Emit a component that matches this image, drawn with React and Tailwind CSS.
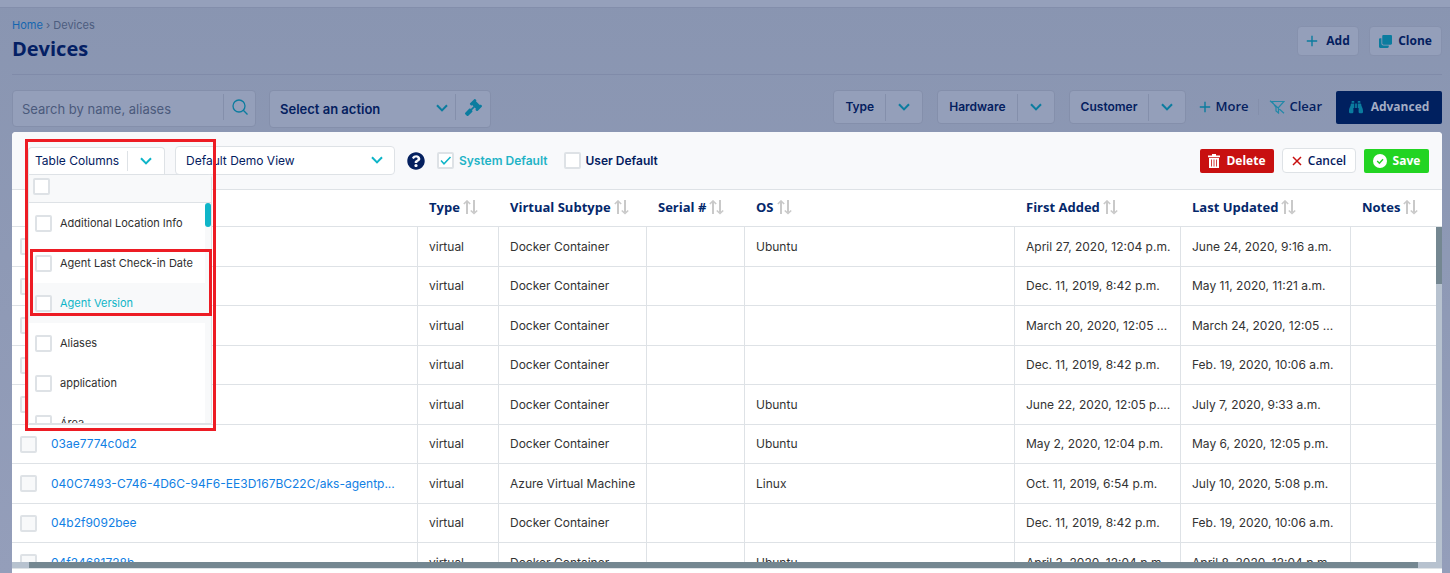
import React from "react";
import { FaGavel, FaClone, FaBinoculars, FaQuestionCircle } from "react-icons/fa";

const OPTIONS = [
  "Additional Location Info",
  "Agent Last Check-in Date",
  "Agent Version",
  "Aliases",
  "application",
  "Área",
];

const COLUMNS = ["Type", "Virtual Subtype", "Serial #", "OS", "First Added", "Last Updated", "Notes"];

const ROWS = [
  ["", "Docker Container", "Ubuntu", "April 27, 2020, 12:04 p.m.", "June 24, 2020, 9:16 a.m."],
  ["", "Docker Container", "", "Dec. 11, 2019, 8:42 p.m.", "May 11, 2020, 11:21 a.m."],
  ["", "Docker Container", "", "March 20, 2020, 12:05 ...", "March 24, 2020, 12:05 ..."],
  ["", "Docker Container", "", "Dec. 11, 2019, 8:42 p.m.", "Feb. 19, 2020, 10:06 a.m."],
  ["", "Docker Container", "Ubuntu", "June 22, 2020, 12:05 p....", "July 7, 2020, 9:33 a.m."],
  ["03ae7774c0d2", "Docker Container", "Ubuntu", "May 2, 2020, 12:04 p.m.", "May 6, 2020, 12:05 p.m."],
  ["040C7493-C746-4D6C-94F6-EE3D167BC22C/aks-agentp...", "Azure Virtual Machine", "Linux", "Oct. 11, 2019, 6:54 p.m.", "July 10, 2020, 5:08 p.m."],
  ["04b2f9092bee", "Docker Container", "", "Dec. 11, 2019, 8:42 p.m.", "Feb. 19, 2020, 10:06 a.m."],
  ["04f24681728b", "Docker Container", "Ubuntu", "April 3, 2020, 12:04 p.m.", "April 8, 2020, 12:04 p.m."],
];

function Chevron({ className = "text-[#0fb5c8]" }) {
  return (
    <svg viewBox="0 0 12 8" className={`h-2 w-3 shrink-0 ${className}`} fill="none" stroke="currentColor" strokeWidth="2" aria-hidden="true">
      <path d="M1 1.2 6 6.4 11 1.2" />
    </svg>
  );
}

function Plus() {
  return (
    <svg viewBox="0 0 12 12" className="size-3 text-[#0b7c9f]" fill="none" stroke="currentColor" strokeWidth="1.4" aria-hidden="true">
      <path d="M6 .8v10.4M.8 6h10.4" />
    </svg>
  );
}

function SortIcon() {
  return (
    <svg viewBox="0 0 15 15" className="size-[15px] text-[#c9c9c9]" fill="none" stroke="currentColor" aria-hidden="true">
      <path d="M4 1.5V14M11 0v12.5" strokeWidth="2" />
      <path d="M.8 4 4 1l3.2 3M7.8 10.5l3.2 3 3.2-3" strokeWidth="1.6" />
    </svg>
  );
}

function CheckBox({ label, checked = false, className = "bg-white" }) {
  return (
    <span className="relative inline-flex size-[17px] shrink-0">
      <input
        type="checkbox"
        aria-label={label}
        defaultChecked={checked}
        className={`peer size-[17px] appearance-none rounded-xs border-2 border-[#dee2e6] ${className}`}
      />
      <svg viewBox="0 0 17 17" className="pointer-events-none absolute inset-0 hidden text-[#0fb5c8] peer-checked:block" fill="none" stroke="currentColor" strokeWidth="1.5" aria-hidden="true">
        <path d="M4 8.5 7 11.8 13.5 5" />
      </svg>
    </span>
  );
}

function FilterButton({ children }) {
  return (
    <button type="button" className="flex h-[34px] items-center rounded-sm border border-[#848fab] bg-[#949fba] text-[12px] font-semibold text-[#04205f]">
      <span className="px-[11px]">{children}</span>
      <span className="flex h-[27px] items-center border-l border-[#848fab] px-3">
        <Chevron className="text-[#0b7c9f]" />
      </span>
    </button>
  );
}

function ColumnMenu() {
  return (
    <div className="absolute left-0 top-full z-10 w-[184px] rounded-tr border border-[#dee2e6] bg-white">
      <div className="flex h-[27px] items-start bg-[#f8f9fa] px-1 pt-[3px]">
        <CheckBox label="Select all columns" />
      </div>
      <div className="relative h-[221px] overflow-hidden border-t border-[#dee2e6]">
        <ul>
          {OPTIONS.map((name) => (
            <li key={name} className={name === "Agent Version" ? "bg-[#f8f9fa] text-[#0fb5c8]" : "text-[#2f2f2f]"}>
              <label className="flex h-10 items-center gap-2 pl-[6px] text-[11px] font-normal">
                <CheckBox label={name} />
                {name}
              </label>
            </li>
          ))}
        </ul>
        <div className="absolute inset-y-0 right-0 w-[6px] bg-[#f8f9fa]">
          <div className="h-6 rounded-full bg-[#0fb5c8]" />
        </div>
      </div>
      <div className="pointer-events-none absolute left-px top-[74px] h-[67px] w-[182px] border-[3px] border-[#ed1c24]" />
    </div>
  );
}

function ViewBar() {
  return (
    <div className="flex h-[58px] items-center justify-between border-b border-[#dee2e6] bg-[#f8f9fb] pl-4 pr-[13px]">
      <div className="flex items-center">
        <div className="relative mr-[10px]">
          <button type="button" className="flex h-[27px] items-center rounded-t-sm border border-b-0 border-[#dee2e6] bg-white text-[12px] text-[#04205f]">
            <span className="w-[98px] pl-[6px] text-left">Table Columns</span>
            <span className="flex h-5 items-center border-l border-[#dee2e6] px-3">
              <Chevron />
            </span>
          </button>
          <ColumnMenu />
          <div className="pointer-events-none absolute -left-[3px] -top-2 z-20 h-[292px] w-[191px] border-[3px] border-[#ed1c24]" />
        </div>
        <div className="relative mr-3">
          <select aria-label="Saved view" className="h-[29px] w-[220px] appearance-none rounded-sm border border-[#dee2e6] bg-white pl-[10px] text-[12px] text-[#04205f]">
            <option>Default Demo View</option>
          </select>
          <span className="pointer-events-none absolute right-3 top-[10px] flex">
            <Chevron />
          </span>
        </div>
        <FaQuestionCircle className="mr-3 size-[18px] text-[#04205f]" aria-label="Help" />
        <label className="mr-4 flex items-center gap-[5px] text-[12px] font-semibold text-[#22b3c6]">
          <CheckBox label="System Default" checked />
          System Default
        </label>
        <label className="flex items-center gap-[5px] text-[12px] font-semibold text-[#04205f]">
          <CheckBox label="User Default" />
          User Default
        </label>
      </div>
      <div className="flex items-center font-['Open_Sans',sans-serif] text-[12px]">
        <button type="button" className="mr-2 flex h-6 w-[74px] items-center justify-center gap-[6px] rounded-xs bg-[#c81010] font-bold text-white">
          <svg viewBox="0 0 12 14" className="h-[14px] w-3" aria-hidden="true">
            <path d="M4 0h4v1.4h4v1.8H0V1.4h4zM1 4h10v10H1z" fill="currentColor" />
            <path d="M3.5 5.5v7M6 5.5v7M8.5 5.5v7" stroke="#c81010" strokeWidth=".8" />
          </svg>
          Delete
        </button>
        <button type="button" className="mr-2 flex h-[25px] w-[74px] items-center justify-center gap-[6px] rounded-sm border border-[#dee2e6] bg-white font-semibold text-[#04205f]">
          <svg viewBox="0 0 10 10" className="size-[10px] text-[#c81010]" stroke="currentColor" strokeWidth="1.5" aria-hidden="true">
            <path d="m1 1 8 8M9 1 1 9" />
          </svg>
          Cancel
        </button>
        <button type="button" className="flex h-6 w-[65px] items-center justify-center gap-[6px] rounded-xs bg-[#22d422] font-bold text-white">
          <svg viewBox="0 0 14 14" className="size-[14px]" fill="none" aria-hidden="true">
            <circle cx="7" cy="7" r="7" fill="currentColor" />
            <path d="M4.2 7 6.4 9.2 10 5.2" stroke="#22d422" strokeWidth="1.4" />
          </svg>
          Save
        </button>
      </div>
    </div>
  );
}

function DeviceTable() {
  const cell = "border-b border-r border-[#dee2e6] px-[11px] whitespace-nowrap overflow-hidden";
  return (
    <div className="flex min-h-0 flex-1 overflow-hidden">
      <div className="min-w-0 flex-1">
        <table className="w-full table-fixed border-separate border-spacing-0 text-left text-[12px] text-[#333]">
          <colgroup>
            <col className="w-[406px]" />
            <col className="w-[81px]" />
            <col className="w-[148px]" />
            <col className="w-[98px]" />
            <col />
            <col className="w-[166px]" />
            <col className="w-[170px]" />
            <col className="w-[85px]" />
          </colgroup>
          <thead>
            <tr className="h-[37px] font-['Open_Sans',sans-serif] text-[13px] text-[#04286b]">
              <th className="border-b border-[#dee2e6]" aria-label="Name" />
              {COLUMNS.map((name) => (
                <th key={name} className="whitespace-nowrap border-b border-[#dee2e6] pb-px pl-[11px] font-bold">
                  <span className="inline-flex items-center gap-[3px]">
                    {name}
                    <SortIcon />
                  </span>
                </th>
              ))}
            </tr>
          </thead>
          <tbody>
            {ROWS.map(([name, subtype, os, added, updated], i) => (
              <tr key={i} className="h-10 even:h-[39px]">
                <td className="overflow-hidden whitespace-nowrap border-b border-r border-[#dee2e6] pl-2">
                  <div className="flex items-center gap-[14px]">
                    <CheckBox label={`Row ${i + 1}`} className="bg-[#f8f9fa]" />
                    {name && <a href="#device" className="text-[#1180e4]">{name}</a>}
                  </div>
                </td>
                <td className={cell}>virtual</td>
                <td className={cell}>{subtype}</td>
                <td className={cell} />
                <td className={cell}>{os}</td>
                <td className={cell}>{added}</td>
                <td className={cell}>{updated}</td>
                <td className="border-b border-[#dee2e6]" />
              </tr>
            ))}
          </tbody>
        </table>
      </div>
      <div className="flex w-[6px] flex-col">
        <div className="h-[37px] shrink-0 border-b border-[#dee2e6]" />
        <div className="flex-1 bg-[#b7c2cf]">
          <div className="h-[57px] bg-[#748791]" />
        </div>
      </div>
    </div>
  );
}

export default function App() {
  return (
    <div className="flex h-screen flex-col overflow-hidden bg-linear-to-b from-[#8995b1] to-[#949eba] font-[Inter,sans-serif]">
      <div className="h-2 shrink-0 border-b border-[#838eab] bg-[#95a0bb]" />
      <header className="mx-2 ml-3 flex h-[67px] shrink-0 items-center justify-between border-b border-[#808ba9]">
        <div className="pb-[3px]">
          <nav className="mb-[2px] text-[11px] leading-4 text-[#4d5d7f]">
            <a href="#home" className="text-[#1566b0]">Home</a> › Devices
          </nav>
          <h1 className="font-['Open_Sans',sans-serif] text-[20px] font-bold leading-7 text-[#042064]">Devices</h1>
        </div>
        <div className="flex gap-[10px] font-['Open_Sans',sans-serif] text-[12px] font-bold text-[#04205f]">
          <button type="button" className="flex h-[30px] w-[62px] items-center justify-center gap-2 rounded-sm border border-[#8691ad] bg-[#949fba]">
            <Plus />
            Add
          </button>
          <button type="button" className="flex h-[30px] w-[73px] items-center justify-center gap-[6px] rounded-sm border border-[#8691ad] bg-[#949fba]">
            <FaClone className="size-[13px] text-[#0b7c9f]" />
            Clone
          </button>
        </div>
      </header>

      <div className="mx-2 mb-1 ml-3 mt-[15px] flex h-[38px] shrink-0 items-start justify-between">
        <div className="flex gap-[13px]">
          <div className="flex h-[37px] w-[244px] items-start rounded-sm border border-[#848fab] bg-[#949fba]">
            <input
              type="search"
              aria-label="Search by name, aliases"
              placeholder="Search by name, aliases"
              className="h-9 min-w-0 flex-1 bg-transparent pl-[9px] text-[13px] placeholder:text-[#4b5a7c]"
            />
            <button type="button" aria-label="Search" className="mt-[3px] flex h-[26px] w-8 items-center justify-center border-l border-[#848fab] text-[#0b7c9f]">
              <svg viewBox="0 0 16 16" className="size-4" fill="none" stroke="currentColor" strokeWidth="1.3" aria-hidden="true">
                <circle cx="7" cy="7" r="6" />
                <path d="m11.3 11.3 4.2 4.2" />
              </svg>
            </button>
          </div>
          <div className="flex h-[38px] w-[222px] items-start rounded-sm border border-[#848fab] bg-[#949fba]">
            <div className="relative flex-1">
              <select aria-label="Action" className="h-[38px] w-full appearance-none bg-transparent pl-[10px] text-[13px] font-semibold text-[#04205f]">
                <option>Select an action</option>
              </select>
              <span className="pointer-events-none absolute right-[7px] top-[13px] flex">
                <Chevron className="text-[#0b7c9f]" />
              </span>
            </div>
            <button type="button" aria-label="Run action" className="mt-[3px] flex h-[26px] w-[35px] items-center justify-center border-l border-[#848fab] text-[#0b7c9f]">
              <FaGavel className="size-[17px]" />
            </button>
          </div>
        </div>
        <div className="flex items-center">
          <div className="flex gap-[14px]">
            <FilterButton>Type</FilterButton>
            <FilterButton>Hardware</FilterButton>
            <FilterButton>Customer</FilterButton>
          </div>
          <div className="flex items-center font-['Open_Sans',sans-serif] text-[13px] font-semibold text-[#04205f]">
            <button type="button" className="ml-[13px] flex h-[34px] items-center gap-1">
              <Plus />
              More
            </button>
            <span className="mx-[10px] h-4 border-l border-[#848fab]" />
            <button type="button" className="mr-[14px] flex h-[34px] items-center gap-1">
              <svg viewBox="0 0 16 14" className="h-[14px] w-4 text-[#2388a8]" fill="none" stroke="currentColor" strokeWidth="1.2" aria-hidden="true">
                <path d="M3 1.5h12L9.5 7.5V13L7 11V7.5zM1 .8 15 13.2" />
              </svg>
              Clear
            </button>
            <button type="button" className="flex h-[33px] w-[106px] items-center justify-center gap-2 rounded-xs bg-[#00205f] text-[12px] font-bold text-[#a4adc4]">
              <FaBinoculars className="size-[14px] text-[#0b7c9f]" />
              Advanced
            </button>
          </div>
        </div>
      </div>

      <main className="ml-3 mr-2 flex min-h-0 flex-1 flex-col overflow-hidden rounded-t bg-white">
        <ViewBar />
        <DeviceTable />
        <div className="h-[6px] shrink-0 bg-[#b7c2cf] pl-[17px] pr-6">
          <div className="h-full bg-[#748791]" />
        </div>
        <div className="h-[5px] shrink-0 border-t border-[#dee2e6]" />
      </main>
    </div>
  );
}
